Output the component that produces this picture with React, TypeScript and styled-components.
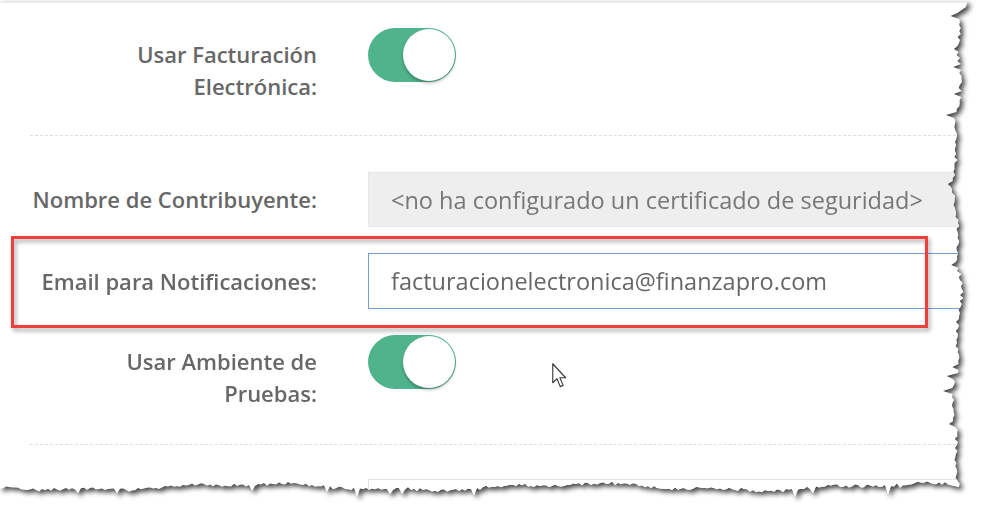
import { useMemo } from 'react';
import styled, { createGlobalStyle } from 'styled-components';

const GlobalStyle = createGlobalStyle`
  html, body {
    margin: 0;
    background: #fff;
    overflow: hidden;
  }
  body {
    font-family: 'Open Sans', 'Liberation Sans', sans-serif;
  }
`;

// jagged outline of the torn paper, right and bottom sides
function tornEdge(): string {
  let seed = 11;
  const rand = () => {
    seed = (seed * 16807) % 2147483647;
    return seed / 2147483647;
  };
  const pts: string[] = ['-20px -20px', '972px -20px', '966px 6px'];
  for (let y = 12; y < 488; y += 3) {
    const wave = Math.sin(y / 37) * 3 + Math.sin(y / 11) * 1.5;
    let x = 957 + wave + (rand() - 0.5) * 4;
    if (rand() < 0.06) x -= 5 + rand() * 4;
    pts.push(`${x.toFixed(1)}px ${y}px`);
  }
  for (let x = 948; x > -20; x -= 3) {
    const wave = Math.sin(x / 53) * 3 + Math.sin(x / 17) * 1.2;
    let y = 486 + wave + (rand() - 0.5) * 3.5;
    if (rand() < 0.05) y += 4 + rand() * 4;
    pts.push(`${x}px ${y.toFixed(1)}px`);
  }
  return `polygon(${pts.join(', ')})`;
}

export default function App() {
  const clip = useMemo(() => tornEdge(), []);

  return (
    <Page>
      <GlobalStyle />
      <ShadowWrap>
        <Sheet $clip={clip}>
          <TopRule />

          <Row $mt={25}>
            <Label $pt={10}>
              Usar Facturación
              <br />
              Electrónica:
            </Label>
            <Toggle $on>
              <Knob />
            </Toggle>
          </Row>

          <Divider $mt={33} $mb={36} />

          <Row>
            <Label $pt={11}>Nombre de Contribuyente:</Label>
            <Field
              $variant='readonly'
              readOnly
              value='<no ha configurado un certificado de seguridad>'
            />
          </Row>

          <Row $mt={26}>
            <Highlight />
            <Label $pt={12}>Email para Notificaciones:</Label>
            <Field
              $variant='focus'
              readOnly
              value='facturacionelectronica@finanzapro.com'
            />
          </Row>

          <Row $mt={26}>
            <Label $pt={10}>
              Usar Ambiente de
              <br />
              Pruebas:
            </Label>
            <Toggle $on>
              <Knob />
            </Toggle>
          </Row>

          <Divider $mt={35} $mb={34} />

          <Row>
            <Label $pt={11} />
            <Field $variant='plain' readOnly value='' />
          </Row>
        </Sheet>
      </ShadowWrap>

      <Cursor viewBox='0 0 12 20'>
        <path
          d='M0.6 0.6 L0.6 15.8 L4 12.6 L6.6 18.9 L8.9 17.9 L6.3 11.8 L10.9 11.8 Z'
          fill='#fff'
          stroke='#3a3a3a'
          strokeWidth='0.9'
          strokeLinejoin='round'
        />
      </Cursor>
    </Page>
  );
}

const Page = styled.div`
  position: relative;
  width: 991px;
  height: 520px;
  overflow: hidden;
  background: #fff;
`;

const ShadowWrap = styled.div`
  filter: drop-shadow(3px 3px 2.5px rgba(0, 0, 0, 0.72));
`;

const Sheet = styled.div<{ $clip: string }>`
  background: #fff;
  min-height: 520px;
  clip-path: ${(p) => p.$clip};
`;

const TopRule = styled.div`
  height: 2px;
  margin-top: 1px;
  background: #ebebeb;
`;

const Row = styled.div<{ $mt?: number }>`
  position: relative;
  display: grid;
  grid-template-columns: 317px 1fr;
  column-gap: 51px;
  align-items: start;
  margin-top: ${(p) => p.$mt ?? 0}px;
`;

const Label = styled.label<{ $pt: number }>`
  padding: ${(p) => p.$pt}px 0 0 10px;
  text-align: right;
  font-size: 22px;
  font-weight: 600;
  line-height: 32px;
  color: #676767;
  white-space: nowrap;
`;

const Toggle = styled.span<{ $on: boolean }>`
  display: flex;
  justify-content: ${(p) => (p.$on ? 'flex-end' : 'flex-start')};
  align-items: center;
  box-sizing: border-box;
  width: 88px;
  height: 54px;
  padding: 1px;
  border-radius: 27px;
  background: ${(p) => (p.$on ? '#4fb38b' : '#dcdcdc')};
`;

const Knob = styled.span`
  width: 52px;
  height: 52px;
  border-radius: 50%;
  background: #fff;
  box-shadow: 0 2px 3px rgba(0, 0, 0, 0.28);
`;

const Field = styled.input<{ $variant: 'readonly' | 'focus' | 'plain' }>`
  box-sizing: border-box;
  width: 100%;
  height: ${(p) => (p.$variant === 'focus' ? 56 : 55)}px;
  margin: 0;
  padding: 0 22px;
  font-family: 'Open Sans', 'Liberation Sans', sans-serif;
  font-size: 23.5px;
  color: ${(p) => (p.$variant === 'readonly' ? '#777' : '#666')};
  background: ${(p) => (p.$variant === 'readonly' ? '#eeeeee' : '#fff')};
  border: 1px solid
    ${(p) =>
      p.$variant === 'focus'
        ? '#74a0d4'
        : p.$variant === 'readonly'
        ? '#e6e6e6'
        : '#e2e2e2'};
  border-radius: 0;
  outline: none;
`;

const Divider = styled.hr<{ $mt: number; $mb: number }>`
  height: 0;
  border: none;
  border-top: 1px dashed #dedede;
  margin: ${(p) => p.$mt}px 0 ${(p) => p.$mb}px 30px;
`;

const Highlight = styled.div`
  position: absolute;
  top: -17px;
  bottom: -19px;
  left: 11px;
  width: 917px;
  box-sizing: border-box;
  border: 3px solid #f23d3d;
  filter: drop-shadow(2px 3px 2px rgba(0, 0, 0, 0.35));
  pointer-events: none;
  z-index: 1;
`;

const Cursor = styled.svg`
  position: absolute;
  left: 552px;
  top: 363px;
  width: 15px;
  height: 25px;
`;
